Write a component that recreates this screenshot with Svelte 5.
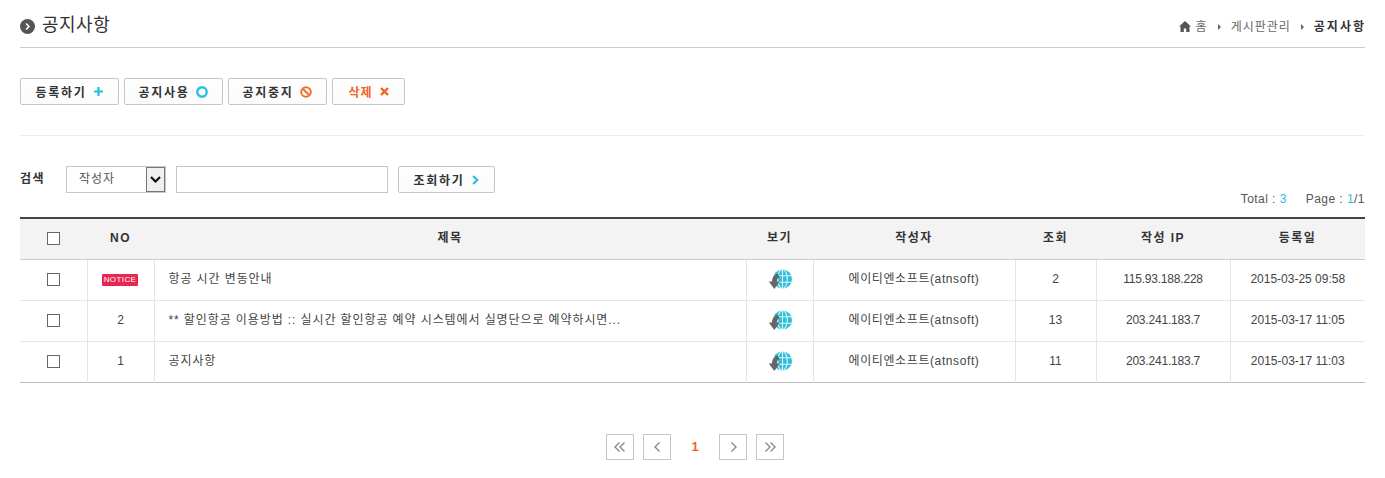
<script>
  const cols = [67, 67, 592, 67, 202, 81, 134, 135];
  const heads = ['NO', '제목', '보기', '작성자', '조회', '작성 IP', '등록일'];
  const rows = [
    { no: null, title: '항공 시간 변동안내', views: 2, ip: '115.93.188.228', date: '2015-03-25 09:58' },
    { no: 2, title: '** 할인항공 이용방법 :: 실시간 할인항공 예약 시스템에서 실명단으로 예약하시면...', views: 13, ip: '203.241.183.7', date: '2015-03-17 11:05' },
    { no: 1, title: '공지사항', views: 11, ip: '203.241.183.7', date: '2015-03-17 11:03' }
  ];
</script>

<div class="page">
  <header class="top">
    <h1>
      <svg class="bullet" width="15" height="15" viewBox="0 0 15 15"><circle cx="7.5" cy="7.5" r="7.5" fill="#555"/><path d="M6 4.5 9 7.5 6 10.5" fill="none" stroke="#fff" stroke-width="1.6"/></svg>
      공지사항
    </h1>
    <nav class="crumbs">
      <svg width="12" height="11" viewBox="0 0 12 11"><path d="M6 0 12 5.5H10.5V11H7.2V7.5H4.8V11H1.5V5.5H0Z" fill="#555"/></svg>
      <span class="home">홈</span>
      <i class="tri"></i>
      <span>게시판관리</span>
      <i class="tri"></i>
      <b>공지사항</b>
    </nav>
  </header>

  <div class="actions">
    <button class="btn w99">등록하기
      <svg class="plus" width="9" height="9" viewBox="0 0 9 9"><path d="M3.4 0H5.6V3.4H9V5.6H5.6V9H3.4V5.6H0V3.4H3.4Z" fill="#27bfdc"/></svg>
    </button>
    <button class="btn w99">공지사용
      <svg width="12" height="12" viewBox="0 0 12 12"><circle cx="6" cy="6" r="4.7" fill="none" stroke="#27bfdc" stroke-width="2.4"/></svg>
    </button>
    <button class="btn w99">공지중지
      <svg width="12" height="12" viewBox="0 0 12 12"><circle cx="6" cy="6" r="4.8" fill="none" stroke="#f2722b" stroke-width="2"/><path d="M2.8 2.8 9.2 9.2" stroke="#f2722b" stroke-width="2"/></svg>
    </button>
    <button class="btn del">삭제
      <svg width="9" height="9" viewBox="0 0 9 9"><path d="M1 1 8 8M8 1 1 8" stroke="#f0641e" stroke-width="2.4"/></svg>
    </button>
  </div>

  <form class="search">
    <strong>검색</strong>
    <div class="select">
      <span>작성자</span>
      <span class="arrow"><svg width="11" height="7" viewBox="0 0 11 7"><path d="M1 1 5.5 5.5 10 1" fill="none" stroke="#111" stroke-width="2.2"/></svg></span>
    </div>
    <input type="text" />
    <button type="button" class="btn go">조회하기
      <svg width="7" height="10" viewBox="0 0 7 10"><path d="M1.2 1 5.2 5 1.2 9" fill="none" stroke="#27bfdc" stroke-width="2.2"/></svg>
    </button>
  </form>

  <p class="total">Total : <em>3</em><span class="gap"></span>Page : <em>1</em>/1</p>

  <table>
    <colgroup>
      {#each cols as w}<col style="width:{w}px" />{/each}
    </colgroup>
    <thead>
      <tr>
        <th><span class="check"></span></th>
        {#each heads as h}<th>{h}</th>{/each}
      </tr>
    </thead>
    <tbody>
      {#each rows as r}
        <tr>
          <td class="first"><span class="check"></span></td>
          <td>{#if r.no === null}<span class="notice">NOTICE</span>{:else}{r.no}{/if}</td>
          <td class="title">{r.title}</td>
          <td>
            <svg class="globe" width="24" height="21" viewBox="0 0 24 21">
              <circle cx="14.5" cy="10" r="9.5" fill="#2cc0d8"/>
              <g fill="none" stroke="#dff6fa" stroke-width="1.1">
                <ellipse cx="14.5" cy="10" rx="4.8" ry="9.5"/>
                <path d="M14.5 .5V19.5M5.5 6.8H23.5M5.5 13.2H23.5"/>
              </g>
              <path d="M10 4.5C6 5.5 4 8.5 4 12.5H.8L6.3 20 11.8 12.5H8.5C8.5 10.5 9.5 9 11.5 8.5Z" fill="#666"/>
            </svg>
          </td>
          <td class="author">에이티엔소프트(atnsoft)</td>
          <td>{r.views}</td>
          <td class="ip">{r.ip}</td>
          <td>{r.date}</td>
        </tr>
      {/each}
    </tbody>
  </table>

  <nav class="pager">
    <a href="#first" class="pg" aria-label="first"><svg width="12" height="10" viewBox="0 0 12 10"><path d="M5.5 .5 1 5 5.5 9.5M10.5 .5 6 5 10.5 9.5" fill="none" stroke="#888" stroke-width="1.4"/></svg></a>
    <a href="#prev" class="pg" aria-label="prev"><svg width="7" height="10" viewBox="0 0 7 10"><path d="M5.5 .5 1 5 5.5 9.5" fill="none" stroke="#888" stroke-width="1.4"/></svg></a>
    <b class="cur">1</b>
    <a href="#next" class="pg" aria-label="next"><svg width="7" height="10" viewBox="0 0 7 10"><path d="M1.5 .5 6 5 1.5 9.5" fill="none" stroke="#888" stroke-width="1.4"/></svg></a>
    <a href="#last" class="pg" aria-label="last"><svg width="12" height="10" viewBox="0 0 12 10"><path d="M1.5 .5 6 5 1.5 9.5M6.5 .5 11 5 6.5 9.5" fill="none" stroke="#888" stroke-width="1.4"/></svg></a>
  </nav>
</div>

<style>
  :global(body) {
    margin: 0;
    background: #fff;
    color: #333;
    font: 12px/1.2 "Liberation Sans", "Noto Sans CJK KR", sans-serif;
  }
  .page { padding: 0 20px; height: 478px; box-sizing: border-box; overflow: hidden; }
  .top {
    height: 47px;
    box-sizing: content-box;
    border-bottom: 1px solid #ccc;
    display: flex;
    justify-content: space-between;
    align-items: center;
    padding: 0;
  }
  h1 {
    margin: 5px 0 0;
    font-size: 18px;
    letter-spacing: .5px;
    font-weight: 400;
    color: #333;
    display: flex;
    align-items: center;
    gap: 7px;
  }
  .crumbs { display: flex; align-items: center; color: #666; margin-top: 7px; letter-spacing: 1px; }
  .crumbs svg { margin-right: 5px; }
  .crumbs b { color: #333; font-weight: 700; letter-spacing: 2px; margin-right: -1px; }
  .tri {
    width: 0; height: 0;
    border-left: 3px solid #666;
    border-top: 3px solid transparent;
    border-bottom: 3px solid transparent;
    margin: 0 10px 0 10px;
  }
  .actions {
    display: flex;
    gap: 5px;
    padding: 30px 0;
    border-bottom: 1px solid #eee;
  }
  .btn {
    height: 27px;
    box-sizing: border-box;
    border: 1px solid #c6c6c6;
    border-radius: 2px;
    background: linear-gradient(#fff, #fbfbfb);
    color: #333;
    font: 700 12px "Liberation Sans", "Noto Sans CJK KR", sans-serif;
    letter-spacing: 1.7px;
    display: inline-flex;
    align-items: center;
    justify-content: center;
    gap: 7px;
    padding: 0;
  }
  .plus { margin-left: 1px; }
  .w99 { width: 99px; }
  .del { width: 73px; color: #f0641e; letter-spacing: 1px; gap: 7px; }
  .go { width: 97px; gap: 8px; }
  .search {
    display: flex;
    align-items: center;
    margin-top: 30px;
    height: 27px;
  }
  .search strong { width: 46px; font-weight: 700; letter-spacing: 1.5px; }
  .select {
    width: 100px;
    height: 27px;
    box-sizing: border-box;
    border: 1px solid #c6c6c6;
    display: flex;
    justify-content: space-between;
    align-items: center;
    padding-left: 12px;
    color: #555;
    letter-spacing: 1px;
    margin-right: 10px;
  }
  .select span:first-child { margin-top: -1px; }
  .arrow {
    width: 19px;
    height: 25px;
    box-sizing: border-box;
    border: 1px solid #777;
    background: #f0f0ee;
    display: flex;
    align-items: center;
    justify-content: center;
  }
  input {
    width: 212px;
    height: 27px;
    box-sizing: border-box;
    border: 1px solid #c6c6c6;
    margin: 0 10px 0 0;
    padding: 0;
  }
  .total {
    margin: 0;
    height: 24px;
    line-height: 12px;
    text-align: right;
    font-size: 12px;
    letter-spacing: .45px;
    color: #555;
    box-sizing: border-box;
  }
  .total em { font-style: normal; color: #27bfdc; }
  .gap { display: inline-block; width: 19px; }
  table {
    width: 1345px;
    border-collapse: collapse;
    table-layout: fixed;
    border-top: 2px solid #444;
    border-bottom: 1px solid #bbb;
  }
  th {
    height: 41px;
    padding: 0 0 2px;
    background: #f3f3f3;
    font-weight: 700;
    color: #333;
    letter-spacing: 1.4px;
    border-bottom: 1px solid #ccc;
    box-sizing: border-box;
  }
  td {
    height: 41px;
    padding: 0 0 1px;
    box-sizing: border-box;
    text-align: center;
    color: #444;
    border-left: 1px solid #e5e5e5;
    border-bottom: 1px solid #e5e5e5;
  }
  tr:last-child td { border-bottom: none; }
  td.first { border-left: none; }
  td.title { text-align: left; padding-left: 14px; letter-spacing: .9px; }
  td.author { letter-spacing: .6px; }
  td.ip { letter-spacing: -.2px; }
  .check {
    display: inline-block;
    width: 13px;
    height: 13px;
    box-sizing: border-box;
    border: 1px solid #666;
    background: #fff;
    vertical-align: middle;
  }
  .notice {
    display: inline-block;
    width: 36px;
    height: 12px;
    line-height: 12px;
    margin-left: -1px;
    background: #e8264f;
    border-radius: 1px;
    color: #fff;
    font-size: 8px;
    letter-spacing: .4px;
    vertical-align: middle;
  }
  .globe { display: block; margin: 0 auto; }
  .pager {
    display: flex;
    justify-content: center;
    align-items: center;
    gap: 9px;
    margin-top: 51px;
    padding-left: 5px;
  }
  .pg {
    width: 28px;
    height: 26px;
    box-sizing: border-box;
    border: 1px solid #c6c6c6;
    display: flex;
    align-items: center;
    justify-content: center;
  }
  .cur { width: 30px; text-align: center; color: #f0641e; font-size: 13px; }
</style>
